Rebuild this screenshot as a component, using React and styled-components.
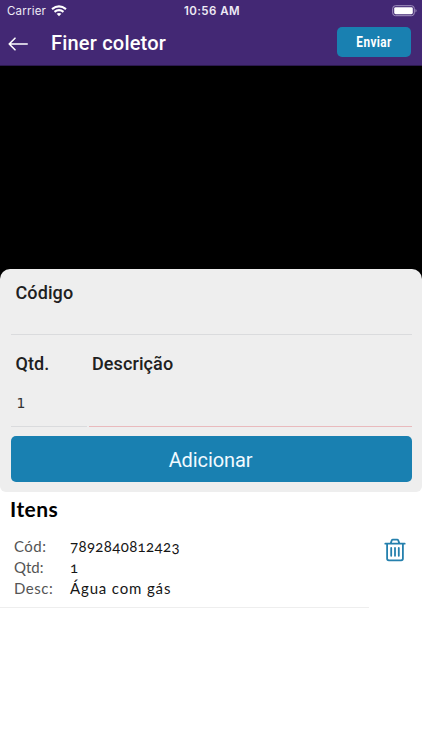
import React from "react";
import styled, { createGlobalStyle } from "styled-components";

const GlobalStyle = createGlobalStyle`
  * { box-sizing: border-box; }
  body { margin: 0; background: #fff; font-family: Roboto, sans-serif; }
  button { border: 0; padding: 0; cursor: pointer; }
`;

const Screen = styled.main`
  display: flex;
  flex-direction: column;
  width: 422px;
  height: 750px;
  overflow: hidden;
  background: #fff;
`;

const Header = styled.header`
  height: 66px;
  flex: none;
  background: #432874;
  border-bottom: 1px solid #2c194f;
  color: #fff;
`;

const StatusBar = styled.div`
  display: grid;
  grid-template-columns: 1fr auto 1fr;
  align-items: center;
  height: 22px;
  padding: 0 5px 0 7px;
  font: 400 11.5px/22px Inter, sans-serif;
  color: #eeeaf5;
`;

const Carrier = styled.div`
  display: flex;
  align-items: center;
  gap: 5px;
  letter-spacing: 0.2px;
`;

const Clock = styled.span`
  font-weight: 600;
  font-size: 11.5px;
  letter-spacing: 0.45px;
`;

const BatteryIcon = styled.svg`
  justify-self: end;
  margin-top: -1px;
`;

const NavBar = styled.nav`
  display: flex;
  align-items: center;
  height: 43px;
  padding: 0 11px 3px 8px;
`;

const BackButton = styled.button`
  display: flex;
  width: 43px;
  background: none;
  margin-top: 3px;
`;

const Title = styled.h1`
  flex: 1;
  margin: 2px 0 0;
  font: 500 20px/26px Roboto, sans-serif;
  letter-spacing: 0.2px;
`;

const SendButton = styled.button`
  width: 74px;
  height: 30px;
  border-radius: 5px;
  background: #1980b1;
  color: #fff;
  font: 700 14px/29px Roboto, sans-serif;
`;

const Condensed = styled.span`
  display: inline-block;
  transform: scaleX(0.84);
  letter-spacing: 0.5px;
`;

const Scanner = styled.section`
  height: 215px;
  flex: none;
  background: #000;
`;

const Form = styled.form`
  display: flex;
  flex-direction: column;
  flex: none;
  height: 223px;
  margin-top: -12px;
  padding: 0 10px 10px 11px;
  border-radius: 10px 10px 6px 6px;
  background: #eee;
`;

const FieldRow = styled.div`
  display: grid;
  grid-template-columns: ${(p) => p.$columns};
  column-gap: 2px;
  height: ${(p) => p.$height}px;
`;

const Field = styled.label`
  display: flex;
  flex-direction: column;
  padding: ${(p) => p.$top}px 0 0 ${(p) => p.$inset}px;
  border-bottom: ${(p) => (p.$error ? "1px solid #e9babd" : "1px solid #dadbdd")};
`;

const Label = styled.span`
  font: 500 18px/24px Roboto, sans-serif;
  color: #202020;
  letter-spacing: ${(p) => p.$spacing || 0}px;
`;

const Value = styled.span`
  padding: 16px 0 0 1px;
  font: 400 14px/22px "DejaVu Sans", sans-serif;
  color: #333;
`;

const AddButton = styled.button`
  height: 46px;
  margin: auto 0 0;
  padding-right: 2px;
  border-radius: 5px;
  background: #1980b1;
  color: #f1faff;
  font: 400 20px/48px Roboto, sans-serif;
  letter-spacing: -0.1px;
`;

const Items = styled.section`
  padding-top: 5px;
`;

const SectionTitle = styled.h2`
  margin: 0 0 1px 10px;
  font: 700 21px/24px Lato, sans-serif;
  letter-spacing: 0.45px;
  color: #000;
`;

const Item = styled.article`
  display: grid;
  grid-template-columns: 369px 53px;
  height: 86px;
`;

const Details = styled.dl`
  display: grid;
  grid-template-columns: 56px 1fr;
  grid-auto-rows: 21px;
  margin: 0;
  padding: 14px 0 0 14px;
  border-bottom: 1px solid #eee;
  font: 400 15px/21px Lato, sans-serif;
  font-variant-numeric: oldstyle-nums;
`;

const Term = styled.dt`
  color: #555;
  font-weight: 400;
  letter-spacing: ${(p) => p.$spacing}px;
`;

const Description = styled.dd`
  margin: 0;
  color: #161616;
  letter-spacing: ${(p) => p.$spacing}px;
`;

const DeleteButton = styled.button`
  align-self: start;
  display: flex;
  justify-content: center;
  padding-right: 1px;
  margin-top: 16px;
  background: none;
`;

const details = [
  { term: "Cód:", value: "7892840812423", termSpacing: 0.5, valueSpacing: 0.35 },
  { term: "Qtd:", value: "1", termSpacing: 0, valueSpacing: 0 },
  { term: "Desc:", value: "Água com gás", termSpacing: 0.5, valueSpacing: 0.85 },
];

function Wifi() {
  return (
    <svg width="16" height="12" viewBox="0 0 16 12" fill="none" stroke="#fff" strokeWidth="2.1">
      <path d="M1 4.1Q8-1.4 15 4.1M3.5 6.8Q8 3.3 12.5 6.8" />
      <path d="M5.6 8.8Q8 7.1 10.4 8.8L8 11.3Z" fill="#fff" stroke="none" />
    </svg>
  );
}

function Battery() {
  return (
    <BatteryIcon width="25" height="12" viewBox="0 0 25 12">
      <rect x=".7" y=".7" width="21.6" height="10" rx="2.8" fill="none" stroke="#a494c0" />
      <rect x="2.2" y="2.2" width="18.6" height="7" rx="1.4" fill="#fff" />
      <path d="M23.5 4v3.6q1-.5 1-1.8t-1-1.8" fill="#a494c0" />
    </BatteryIcon>
  );
}

function BackArrow() {
  return (
    <svg width="21" height="16" viewBox="0 0 21 16" fill="none" stroke="#fff" strokeWidth="1.6" strokeLinecap="round" strokeLinejoin="round">
      <path d="M19.2 8H1.2M7 2.2L1.2 8L7 13.8" />
    </svg>
  );
}

function Trash() {
  return (
    <svg width="22" height="24" viewBox="0 0 22 24" fill="none" stroke="#2580ad" strokeWidth="1.8" strokeLinecap="round" strokeLinejoin="round">
      <path d="M1.3 5.7H20.7M3.1 5.9V20.6Q3.1 22.3 4.8 22.3H17.2Q18.9 22.3 18.9 20.6V5.9M6.7 5.4L7.7 2.5Q8 1.7 8.9 1.7H13.1Q14 1.7 14.3 2.5L15.3 5.4" />
      <path d="M7.2 10V17.8M11 10V17.8M14.8 10V17.8" />
    </svg>
  );
}

export default function App() {
  return (
    <>
      <GlobalStyle />
      <Screen>
        <Header>
          <StatusBar>
            <Carrier>Carrier <Wifi /></Carrier>
            <Clock>10:56 AM</Clock>
            <Battery />
          </StatusBar>
          <NavBar>
            <BackButton aria-label="Voltar"><BackArrow /></BackButton>
            <Title>Finer coletor</Title>
            <SendButton><Condensed>Enviar</Condensed></SendButton>
          </NavBar>
        </Header>
        <Scanner />
        <Form onSubmit={(event) => event.preventDefault()}>
          <FieldRow $columns="1fr" $height={66}>
            <Field $top={12} $inset={4.5}><Label $spacing={0.1}>Código</Label></Field>
          </FieldRow>
          <FieldRow $columns="76px 1fr" $height={92}>
            <Field $top={17} $inset={4.5}><Label $spacing={0.1}>Qtd.</Label><Value>1</Value></Field>
            <Field $top={17} $inset={3} $error><Label $spacing={0.1}>Descrição</Label></Field>
          </FieldRow>
          <AddButton type="submit">Adicionar</AddButton>
        </Form>
        <Items>
          <SectionTitle>Itens</SectionTitle>
          <Item>
            <Details>
              {details.map((row) => (
                <React.Fragment key={row.term}>
                  <Term $spacing={row.termSpacing}>{row.term}</Term>
                  <Description $spacing={row.valueSpacing}>{row.value}</Description>
                </React.Fragment>
              ))}
            </Details>
            <DeleteButton aria-label="Excluir item"><Trash /></DeleteButton>
          </Item>
        </Items>
      </Screen>
    </>
  );
}
